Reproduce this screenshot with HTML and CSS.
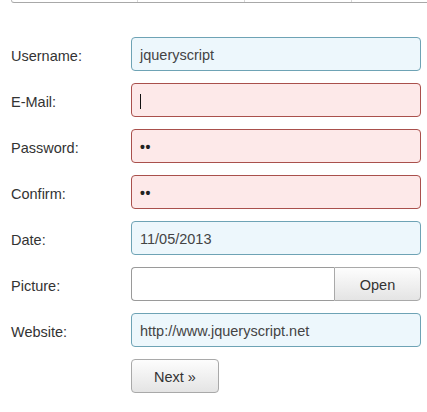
FILE: index.html
```html
<!DOCTYPE html>
<html>
<head>
<meta charset="utf-8">
<link rel="stylesheet" href="styles.css">
</head>
<body>
<div class="tabs">
  <span class="tab first"></span><span class="tab"></span><span class="tab"></span><span class="tab last"></span>
</div>
<form class="form">
  <div class="row"><label class="label">Username:</label><div class="field ok">jqueryscript</div></div>
  <div class="row"><label class="label">E-Mail:</label><div class="field err"><span class="caret"></span></div></div>
  <div class="row"><label class="label">Password:</label><div class="field err dots">••</div></div>
  <div class="row"><label class="label">Confirm:</label><div class="field err dots">••</div></div>
  <div class="row"><label class="label">Date:</label><div class="field ok">11/05/2013</div></div>
  <div class="row"><label class="label">Picture:</label><div class="file"><div class="file-box"></div><div class="btn open">Open</div></div></div>
  <div class="row"><label class="label">Website:</label><div class="field ok">http://www.jqueryscript.net</div></div>
  <div class="row"><span class="label"></span><div class="btn next">Next »</div></div>
</form>
</body>
</html>
```
FILE: styles.css
```css
html, body { margin: 0; padding: 0; background: #fff; }
body { font-family: "Liberation Sans", Arial, sans-serif; font-size: 14.5px; color: #333; width: 427px; height: 412px; overflow: hidden; }
.tabs { display: flex; margin-left: 11px; height: 2px; border-bottom: 1px solid #a8a8a8; border-left: 1px solid #b8b8b8; border-bottom-left-radius: 3px; }
.tab { width: 106px; border-right: 1px solid #d8d8d8; }
.tab.first { width: 125px; }
.tab.last { border-right: none; flex: 1; }
.form { display: flex; flex-direction: column; gap: 12px; padding: 34px 0 0 11px; }
.row { display: flex; align-items: center; height: 34px; }
.label { width: 120px; flex: none; color: #333; padding-top: 3px; }
.field { box-sizing: border-box; width: 290px; height: 34px; border: 1px solid; border-radius: 4px; padding: 2px 8px 0; display: flex; align-items: center; color: #444; }
.field.ok { background: #edf7fc; border-color: #6ea3b5; }
.field.err { background: #fde9e9; border-color: #a9504c; }
.dots { color: #222; font-size: 14px; font-weight: bold; letter-spacing: 0.5px; padding-left: 8px; }
.caret { display: block; width: 1px; height: 15px; background: #111; }
.file { display: flex; width: 290px; height: 34px; }
.file-box { flex: 1; box-sizing: border-box; border: 1px solid #9a9a9a; border-right: none; border-radius: 4px 0 0 4px; background: #fff; }
.btn { box-sizing: border-box; display: flex; align-items: center; justify-content: center; border: 1px solid #a9a9a9; background: linear-gradient(#fdfdfd, #e4e4e4); color: #333; padding-top: 2px; }
.open { width: 87px; border-radius: 0 4px 4px 0; height: 34px; }
.next { width: 88px; height: 34px; border-radius: 4px; }
```
